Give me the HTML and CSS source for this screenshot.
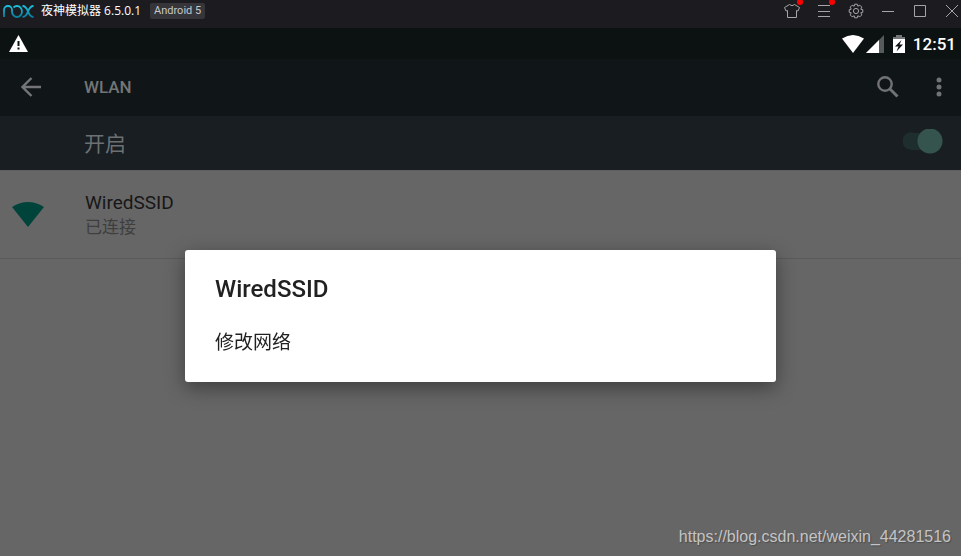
FILE: index.html
```html
<!DOCTYPE html>
<html lang="zh-CN">
<head>
  <meta charset="UTF-8" />
  <title>夜神模拟器</title>
  <meta name="viewport" content="width=device-width, initial-scale=1.0" />
  <link rel="stylesheet" href="styles.css">
</head>
<body>

  <!-- emulator window bar -->
  <header class="titlebar">
    <svg class="logo" width="31" height="13" viewBox="0 0 31 13" fill="none" stroke-width="1.800">
      <defs>
        <linearGradient id="nox" x1="0" y1="0" x2="0" y2="13" gradientUnits="userSpaceOnUse">
          <stop offset="0" stop-color="#1fc4df" />
          <stop offset="1" stop-color="#08799a" />
        </linearGradient>
      </defs>
      <g stroke="url(#nox)">
        <path d="M1 12V5A4 4 0 0 1 9 5V6.500A5 5.500 0 1 0 14 1Q12 1 10.500 2.500" />
        <path d="M19.500 1C23 1 24 4 25 6.500S27 12 30.500 12M30.500 1C27 1 26 4 25 6.500S23 12 19.500 12" />
      </g>
    </svg>
    <span class="app-name">夜神模拟器 6.5.0.1</span>
    <span class="version">Android 5</span>
    <div class="window-tools">
      <button class="tool dot" aria-label="主题">
        <svg width="16" height="16" viewBox="0 0 16 16"><path d="M5.500 1.500Q8 4 10.500 1.500L15.500 4.500L14 8L12.500 7.500V14.500H3.500V7.500L2 8L.5 4.500Z" /></svg>
      </button>
      <button class="tool dot" aria-label="菜单">
        <svg width="16" height="16" viewBox="0 0 16 16"><path d="M2 2.500H14M2 8.500H14M2 13.500H14" /></svg>
      </button>
      <button class="tool" aria-label="设置">
        <svg width="16" height="16" viewBox="0 0 16 16"><path d="M6.700 1.200H9.300L9.800 3.200L11.900 2.200L13.800 4.100L12.800 6.200L14.800 6.700V9.300L12.800 9.800L13.800 11.900L11.900 13.800L9.800 12.800L9.300 14.800H6.700L6.200 12.800L4.100 13.800L2.200 11.900L3.200 9.800L1.200 9.300V6.700L3.200 6.200L2.200 4.100L4.100 2.200L6.200 3.200Z" /><circle cx="8" cy="8" r="2.600" /></svg>
      </button>
      <button class="tool" aria-label="最小化">
        <svg width="16" height="16" viewBox="0 0 16 16"><path d="M2 8.500H14" /></svg>
      </button>
      <button class="tool" aria-label="最大化">
        <svg width="16" height="16" viewBox="0 0 16 16"><path d="M2.500 2.500H13.500V13.500H2.500Z" /></svg>
      </button>
      <button class="tool" aria-label="关闭">
        <svg width="16" height="16" viewBox="0 0 16 16"><path d="M2 2L14 14M14 2L2 14" /></svg>
      </button>
    </div>
  </header>

  <!-- android status bar -->
  <div class="statusbar">
    <svg class="warning" width="19" height="17" viewBox="0 0 19 17">
      <path fill="#fff" d="M9.500 0L19 17H0Z" />
      <path fill="#0c1112" d="M8.500 6H10.500V11H8.500ZM8.500 12.500H10.500V14.500H8.500Z" />
    </svg>
    <svg width="22" height="18" viewBox="0 0 22 18"><path fill="#fff" d="M0 3.500Q11-3.500 22 3.500L11 18Z" /></svg>
    <svg class="signal" width="18" height="18" viewBox="0 0 18 18">
      <path fill="#555a5b" d="M18 0V18H0Z" />
      <path fill="#fff" d="M13 5V18H0Z" />
    </svg>
    <svg class="battery" width="12" height="18" viewBox="0 0 12 18">
      <path fill="#727677" d="M3 0H9V2H12V4H0V2H3Z" />
      <path fill="#fff" d="M0 4H12V18H0Z" />
      <path fill="#0c1112" d="M8.500 5L2 11.500H5.500L3.500 16.500L10 9.500H6.500Z" />
    </svg>
    <time class="clock">12:51</time>
  </div>

  <nav class="appbar">
    <button class="lead" aria-label="返回">
      <svg width="20" height="20" viewBox="0 0 20 20" fill="none" stroke="#737576" stroke-width="2.400"><path d="M20 10H2M10.500 1L1.500 10L10.500 19" /></svg>
    </button>
    <h1 class="title">WLAN</h1>
    <button class="search" aria-label="搜索">
      <svg width="22" height="22" viewBox="0 0 22 22" fill="none" stroke="#707273"><circle cx="8" cy="8" r="6.700" stroke-width="2.400" /><path d="M13 13L20.500 20.500" stroke-width="3" /></svg>
    </button>
    <button class="more" aria-label="更多">
      <svg width="6" height="20" viewBox="0 0 6 20" fill="#707273"><circle cx="3" cy="3" r="2.500" /><circle cx="3" cy="10" r="2.500" /><circle cx="3" cy="17" r="2.500" /></svg>
    </button>
  </nav>

  <div class="switch-row">
    <label for="wlan">开启</label>
    <input class="switch" id="wlan" type="checkbox" role="switch" checked />
  </div>

  <main class="networks">
    <ul class="list">
      <li class="network">
        <svg class="wifi" width="32" height="25" viewBox="0 0 32 25"><path fill="#00433b" d="M0 5Q16-5 32 5L16 25Z" /></svg>
        <div>
          <p class="ssid">WiredSSID</p>
          <p class="state">已连接</p>
        </div>
      </li>
    </ul>
    <a class="watermark" href="https://blog.csdn.net/weixin_44281516">https://blog.csdn.net/weixin_44281516</a>
  </main>

  <div class="overlay">
    <section class="dialog" role="dialog" aria-labelledby="dialog-title">
      <h2 id="dialog-title">WiredSSID</h2>
      <button class="action">修改网络</button>
    </section>
  </div>

</body>
</html>
```
FILE: styles.css
```css
* { box-sizing: border-box; margin: 0; padding: 0 }
body {
  display: flex;
  flex-direction: column;
  min-height: 100vh;
  font-family: Roboto, "Noto Sans CJK SC", sans-serif;
  background: #666;
}
button {
  border: 0;
  background: none;
  font: inherit;
  color: inherit;
  cursor: pointer;
}
svg { display: block; flex: none }

/* Window bar */
.titlebar {
  display: flex;
  align-items: center;
  height: 28px;
  padding: 0 0 6px 3px;
  background: #1c1b20;
  color: #fff;
  font-family: "Open Sans", "Noto Sans CJK SC", sans-serif;
  font-size: 12px;
  line-height: 16px;
}
.app-name { margin: 0 9px 0 7px }
.version {
  padding: 0 4px;
  border-radius: 2px;
  background: #35353a;
  color: #c8c8c8;
  font-family: Roboto, sans-serif;
  font-size: 11px;
}
.window-tools {
  display: flex;
  gap: 14px;
  margin-left: auto;
}
.tool {
  position: relative;
  display: flex;
  justify-content: center;
  width: 18px;
}
.tool svg {
  fill: none;
  stroke: #a5a5a7;
}
.dot::after {
  content: '';
  position: absolute;
  top: -4px;
  right: -2px;
  width: 6px;
  height: 6px;
  border-radius: 50%;
  background: #f00;
}

/* Status bar */
.statusbar {
  display: flex;
  align-items: center;
  height: 31px;
  padding: 0 5px 0 9px;
  background: #0c1112;
  color: #fff;
}
.warning { margin-right: auto }
.signal { margin: 0 9px 0 2px }
.clock {
  margin-left: 8px;
  font-size: 17px;
  font-weight: 500;
}

/* App bar */
.appbar {
  display: flex;
  align-items: center;
  height: 57px;
  padding: 0 19px 2px 21px;
  background: #101517;
  color: #737576;
}
.lead { width: 63px }
.title {
  margin-right: auto;
  font-size: 17px;
  font-weight: 500;
}
.search { margin-right: 37px }

/* On / off row */
.switch-row {
  display: flex;
  align-items: center;
  justify-content: space-between;
  height: 54px;
  padding: 0 18px 3px 84px;
  background: #181e21;
  color: #6d7072;
  font-size: 21px;
}
.switch {
  appearance: none;
  width: 40px;
  height: 25px;
  background:
    radial-gradient(circle at 27px 12px, #35544e 12px, transparent 13px),
    radial-gradient(circle at 8px 12px, #1e2d2d 8px, transparent 9px),
    linear-gradient(#1e2d2d, #1e2d2d) 8px 4px / 20px 17px no-repeat;
  cursor: pointer;
}

/* Network list */
.networks {
  flex: 1;
  display: flex;
  flex-direction: column;
  border-top: 1px solid #5f5f5f;
}
.list { list-style: none }
.network {
  display: flex;
  align-items: center;
  gap: 41px;
  height: 88px;
  padding: 0 12px;
  border-bottom: 1px solid #5a5a5a;
}
.ssid {
  color: #171717;
  font-size: 19px;
  line-height: 24px;
}
.state {
  color: #3e3e3e;
  font-size: 17px;
  line-height: 24px;
}
.watermark {
  margin: auto 10px 9px auto;
  color: #c4c4c4;
  font-family: "Liberation Sans", Arial, sans-serif;
  font-size: 16px;
  line-height: 20px;
  text-decoration: none;
  text-shadow: 1px 1px 1px #4d4d4d;
}

/* Dialog over the list */
.overlay {
  position: fixed;
  inset: 76px 0 0;
  display: flex;
  align-items: center;
  justify-content: center;
}
.dialog {
  width: 61.5%;
  padding: 24px 30px;
  border-radius: 3px;
  background: #fff;
  color: #212121;
  box-shadow: 0 6px 20px rgba(0,0,0,0.4);
}
.dialog h2 {
  font-size: 24px;
  font-weight: 500;
  line-height: 30px;
}
.action {
  display: block;
  width: 100%;
  margin-top: 24px;
  font-size: 19px;
  line-height: 30px;
  text-align: left;
}
```
